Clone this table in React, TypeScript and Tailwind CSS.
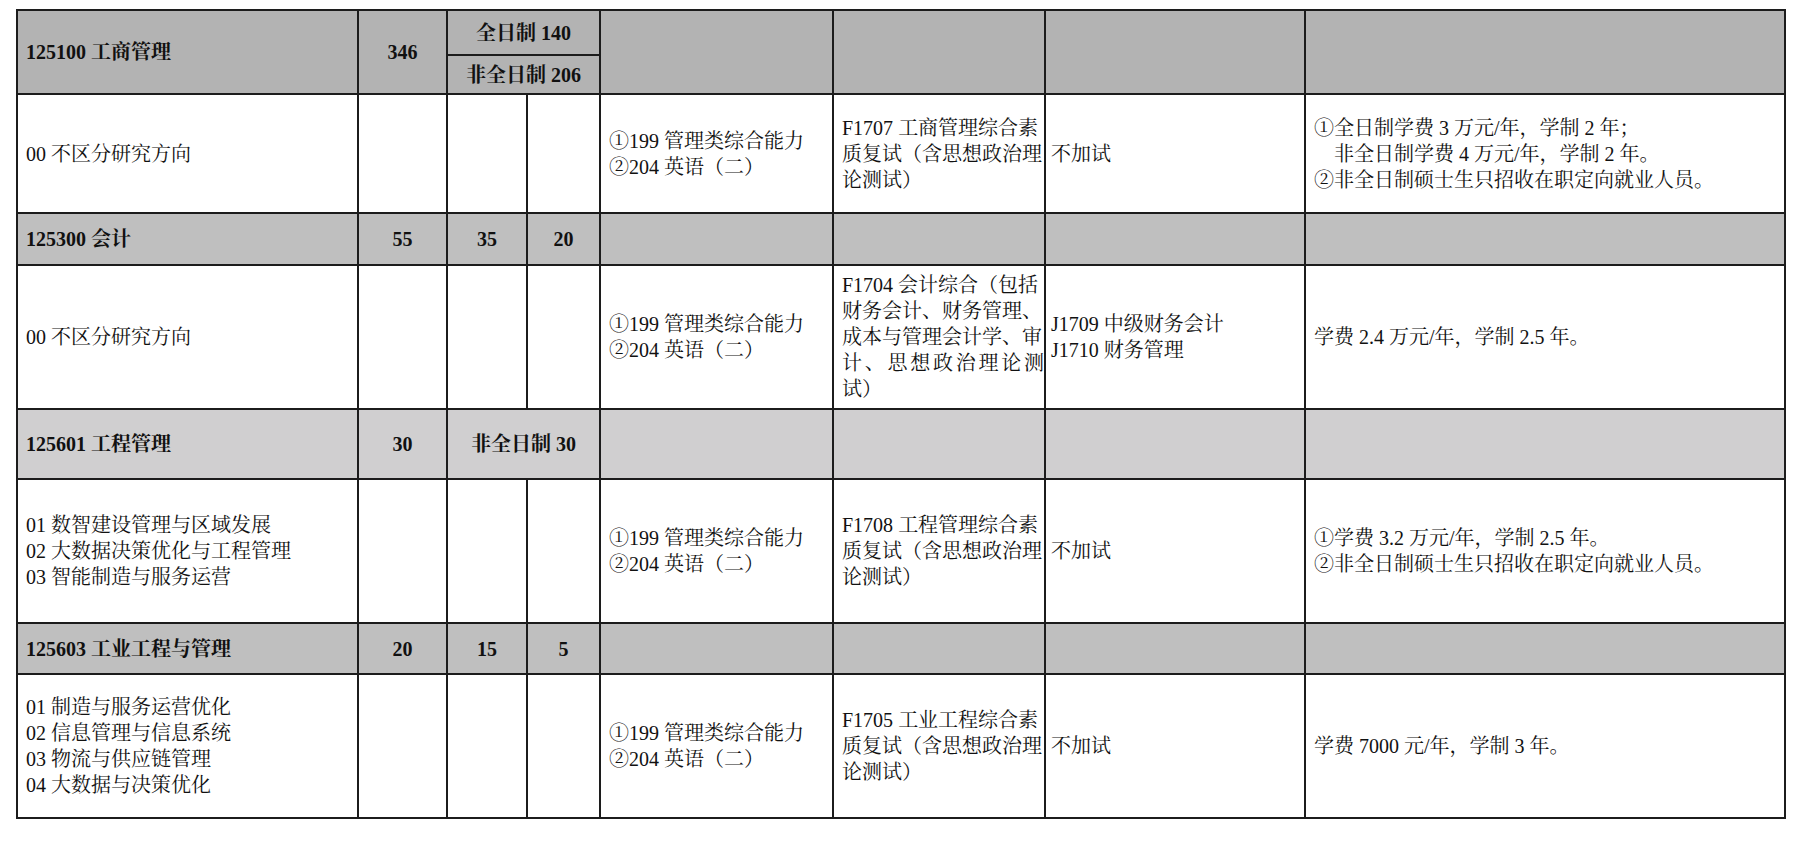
import React from "react";

const font = "[font-family:'Liberation_Serif','Noto_Serif_CJK_SC','Noto_Sans_CJK_SC',serif]";
const cell = "border-2 border-[#1c1c1c] px-[8px] align-middle";

function Lines({ lines, className = "" }: { lines: React.ReactNode[]; className?: string }) {
  return (
    <div className={className}>
      {lines.map((l, i) => (
        <div key={i} className="whitespace-nowrap">
          {l}
        </div>
      ))}
    </div>
  );
}

const exam = ["①199 管理类综合能力", "②204 英语（二）"];

function HeaderRow({
  bg,
  name,
  total,
  a,
  b,
  merged,
  h,
}: {
  bg: string;
  name: string;
  total: string;
  a?: string;
  b?: string;
  merged?: string;
  h: string;
}) {
  return (
    <tr className={`${bg} ${h}`}>
      <td className={`${cell} font-bold`}>{name}</td>
      <td className={`${cell} text-center font-bold`}>{total}</td>
      {merged ? (
        <td colSpan={2} className={`${cell} text-center font-bold`}>
          {merged}
        </td>
      ) : (
        <>
          <td className={`${cell} text-center font-bold`}>{a}</td>
          <td className={`${cell} text-center font-bold`}>{b}</td>
        </>
      )}
      <td className={cell}></td>
      <td className={cell}></td>
      <td className={cell}></td>
      <td className={cell}></td>
    </tr>
  );
}

function BodyRow({
  h,
  dirs,
  retest,
  extra,
  notes,
}: {
  h: string;
  dirs: string[];
  retest: React.ReactNode;
  extra: React.ReactNode;
  notes: React.ReactNode;
}) {
  return (
    <tr className={`bg-white ${h}`}>
      <td className={cell}>
        <Lines lines={dirs} />
      </td>
      <td className={cell}></td>
      <td className={cell}></td>
      <td className={cell}></td>
      <td className={cell}>
        <Lines lines={exam} />
      </td>
      <td className={`${cell} pr-0`}>{retest}</td>
      <td className={`${cell} pl-[5px]`}>{extra}</td>
      <td className={cell}>{notes}</td>
    </tr>
  );
}

const retestStd = (code: string, name: string) => (
  <div className="w-[202px]">
    <div className="whitespace-nowrap">
      {code} {name}
    </div>
    <div className="whitespace-nowrap">质复试（含思想政治理</div>
    <div className="whitespace-nowrap">论测试）</div>
  </div>
);

export default function App() {
  return (
    <div className={`min-h-[852px] bg-white pl-[16px] pt-[9px] text-[20px] leading-[26px] text-[#111] ${font}`}>
      <table className="w-[1770px] table-fixed border-collapse">
        <colgroup>
          <col className="w-[341px]" />
          <col className="w-[89px]" />
          <col className="w-[80px]" />
          <col className="w-[73px]" />
          <col className="w-[233px]" />
          <col className="w-[212px]" />
          <col className="w-[260px]" />
          <col className="w-[480px]" />
        </colgroup>
        <tbody>
          <tr className="h-[45px] bg-[#b3b3b3]">
            <td rowSpan={2} className={`${cell} font-bold`}>
              125100 工商管理
            </td>
            <td rowSpan={2} className={`${cell} text-center font-bold`}>
              346
            </td>
            <td colSpan={2} className={`${cell} text-center font-bold`}>
              全日制 140
            </td>
            <td rowSpan={2} className={cell}></td>
            <td rowSpan={2} className={cell}></td>
            <td rowSpan={2} className={cell}></td>
            <td rowSpan={2} className={cell}></td>
          </tr>
          <tr className="h-[39px] bg-[#b3b3b3]">
            <td colSpan={2} className={`${cell} text-center font-bold`}>
              非全日制 206
            </td>
          </tr>
          <BodyRow
            h="h-[119px]"
            dirs={["00 不区分研究方向"]}
            retest={retestStd("F1707", "工商管理综合素")}
            extra="不加试"
            notes={
              <Lines
                lines={[
                  "①全日制学费 3 万元/年，学制 2 年；",
                  <span className="pl-[20px]">非全日制学费 4 万元/年，学制 2 年。</span>,
                  "②非全日制硕士生只招收在职定向就业人员。",
                ]}
              />
            }
          />
          <HeaderRow bg="bg-[#bfbfbf]" h="h-[52px]" name="125300 会计" total="55" a="35" b="20" />
          <BodyRow
            h="h-[144px]"
            dirs={["00 不区分研究方向"]}
            retest={
              <div className="w-[202px]">
                <div className="whitespace-nowrap">F1704 会计综合（包括</div>
                <div className="whitespace-nowrap">财务会计、财务管理、</div>
                <div className="whitespace-nowrap">成本与管理会计学、审</div>
                <div className="[text-align-last:justify]">计、思想政治理论测</div>
                <div className="whitespace-nowrap">试）</div>
              </div>
            }
            extra={<Lines lines={["J1709 中级财务会计", "J1710 财务管理"]} />}
            notes="学费 2.4 万元/年，学制 2.5 年。"
          />
          <HeaderRow bg="bg-[#d0cfd0]" h="h-[70px]" name="125601 工程管理" total="30" merged="非全日制 30" />
          <BodyRow
            h="h-[144px]"
            dirs={["01 数智建设管理与区域发展", "02 大数据决策优化与工程管理", "03 智能制造与服务运营"]}
            retest={retestStd("F1708", "工程管理综合素")}
            extra="不加试"
            notes={
              <Lines
                lines={["①学费 3.2 万元/年，学制 2.5 年。", "②非全日制硕士生只招收在职定向就业人员。"]}
              />
            }
          />
          <HeaderRow bg="bg-[#bfbfbf]" h="h-[51px]" name="125603 工业工程与管理" total="20" a="15" b="5" />
          <BodyRow
            h="h-[144px]"
            dirs={["01 制造与服务运营优化", "02 信息管理与信息系统", "03 物流与供应链管理", "04 大数据与决策优化"]}
            retest={retestStd("F1705", "工业工程综合素")}
            extra="不加试"
            notes="学费 7000 元/年，学制 3 年。"
          />
        </tbody>
      </table>
    </div>
  );
}
